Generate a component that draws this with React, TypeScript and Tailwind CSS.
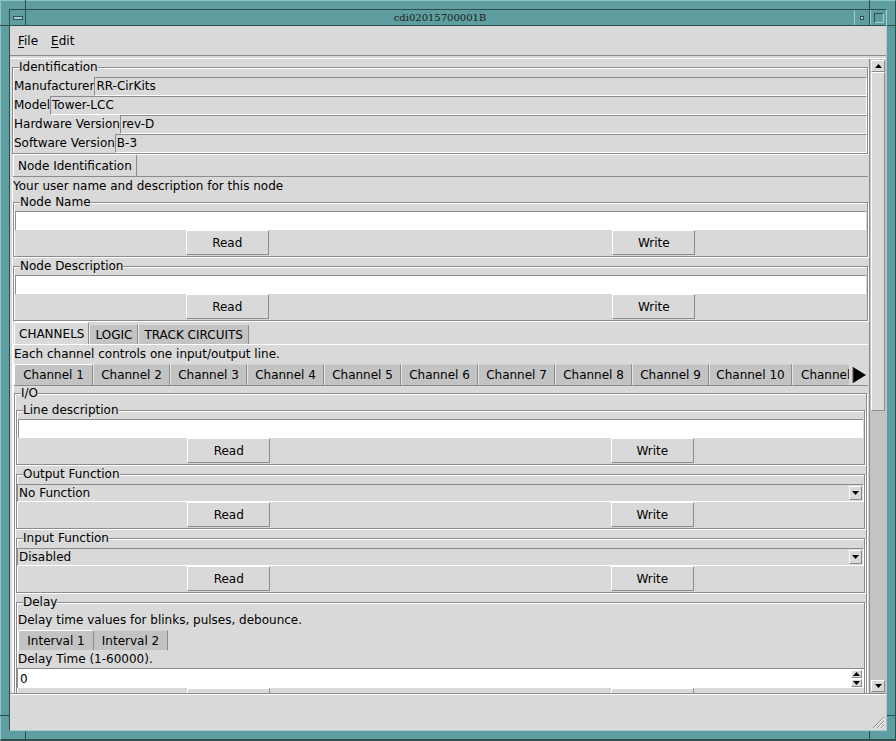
import React from "react";

function Group({
  label,
  className = "",
  children,
}: {
  label: string;
  className?: string;
  children?: React.ReactNode;
}) {
  return (
    <fieldset
      className={`border border-[#8c8c8c] shadow-[inset_1px_1px_0_#fff,1px_1px_0_#fff] ${className}`}
    >
      <legend className="ml-[6px] leading-[15px] bg-[#d9d9d9]">{label}</legend>
      {children}
    </fieldset>
  );
}

function RoEntry({ label, value }: { label: string; value: string }) {
  return (
    <div className="flex h-[19px]">
      <span className="pl-[1px] leading-[18px]">{label}</span>
      <div className="flex-1 border border-t-[#8c8c8c] border-l-[#8c8c8c] border-b-white border-r-white pl-[1px] leading-[16px]">
        {value}
      </div>
    </div>
  );
}

function WhiteEntry({ value = "" }: { value?: string }) {
  return (
    <div className="mt-[1px] pl-[1px] pr-px">
      <div className="h-[19px] bg-white border-t border-l border-[#8c8c8c] pl-[2px] leading-[17px]">
        {value}
      </div>
    </div>
  );
}

function Btn({ label }: { label: string }) {
  return (
    <div className="w-[83px] h-[25px] flex items-center justify-center border border-t-white border-l-white border-b-[#8c8c8c] border-r-[#8c8c8c] bg-[#d9d9d9]">
      {label}
    </div>
  );
}

function RW() {
  return (
    <div className="grid grid-cols-2 justify-items-center">
      <Btn label="Read" />
      <Btn label="Write" />
    </div>
  );
}

function DownTri() {
  return (
    <svg width="7" height="4" viewBox="0 0 7 4">
      <path d="M0 0h7L3.5 4z" fill="#000" />
    </svg>
  );
}

function UpTri() {
  return (
    <svg width="7" height="4" viewBox="0 0 7 4">
      <path d="M0 4h7L3.5 0z" fill="#000" />
    </svg>
  );
}

function Combo({ value }: { value: string }) {
  return (
    <div className="mt-[2px] h-[18px] flex items-center border border-t-[#8c8c8c] border-l-[#8c8c8c] border-b-white border-r-white">
      <span className="flex-1 pl-[1px] leading-[16px]">{value}</span>
      <div className="w-[13px] h-[14px] mr-[1px] flex items-center justify-center border border-t-white border-l-white border-b-[#8c8c8c] border-r-[#8c8c8c]">
        <DownTri />
      </div>
    </div>
  );
}

function Tab({
  label,
  selected = false,
}: {
  label: string;
  selected?: boolean;
}) {
  return (
    <div
      className={`flex items-center whitespace-nowrap rounded-t-[2px] border-r border-r-[#8c8c8c] border-l border-t ${
        selected
          ? "border-l-white border-t-white px-[4px] h-[22px] bg-[#d9d9d9]"
          : "border-l-[#ececec] border-t-[#d9d9d9] px-[5px] h-[20px] mt-[2px] bg-[#c3c3c3]"
      }`}
    >
      {label}
    </div>
  );
}

function SmallTab({
  label,
  w,
  selected = false,
  align = "justify-center",
}: {
  label: string;
  w: string;
  selected?: boolean;
  align?: string;
}) {
  return (
    <div
      className={`${w} ${align} shrink-0 flex items-center whitespace-nowrap h-[21px] bg-[#c3c3c3] border-r border-r-[#8c8c8c] border-t ${
        selected ? "border-l border-white rounded-t-[2px]" : "border-t-[#d0d0d0] border-l border-l-[#e6e6e6]"
      }`}
    >
      {label}
    </div>
  );
}

export default function App() {
  const channels: [string, string][] = [
    ["Channel 2", "w-[77px]"],
    ["Channel 3", "w-[77px]"],
    ["Channel 4", "w-[77px]"],
    ["Channel 5", "w-[77px]"],
    ["Channel 6", "w-[77px]"],
    ["Channel 7", "w-[77px]"],
    ["Channel 8", "w-[77px]"],
    ["Channel 9", "w-[77px]"],
    ["Channel 10", "w-[83px]"],
  ];
  return (
    <div className="relative w-[896px] h-[741px] bg-[#5f9ea0] border-t border-l border-[#8fc3c5] border-r border-r-[#2f4f4f] border-b-2 border-b-[#2f4f4f] pl-[8px] pt-[8px] pr-[8px] pb-[8px] font-['DejaVu_Sans',sans-serif] text-[12px] text-black">
      {/* frame corner marks */}
      <div className="absolute left-[24px] top-[-1px] w-px h-[9px] bg-[#2f4f4f]" />
      <div className="absolute left-[868px] top-[-1px] w-px h-[9px] bg-[#2f4f4f]" />
      <div className="absolute left-[-1px] top-[24px] w-[9px] h-px bg-[#2f4f4f]" />
      <div className="absolute right-[-1px] top-[24px] w-[9px] h-px bg-[#2f4f4f]" />
      <div className="absolute left-[-1px] top-[714px] w-[9px] h-px bg-[#2f4f4f]" />
      <div className="absolute right-[-1px] top-[714px] w-[9px] h-px bg-[#2f4f4f]" />
      <div className="absolute left-[24px] bottom-[-2px] w-px h-[10px] bg-[#2f4f4f]" />
      <div className="absolute left-[868px] bottom-[-2px] w-px h-[10px] bg-[#2f4f4f]" />

      <div className="h-full flex flex-col border-t border-l border-[#2f4f4f] border-r border-b border-r-[#9fcfd1] border-b-[#9fcfd1]">
        {/* title bar */}
        <div className="h-[16px] flex border-b border-[#2f4f4f] bg-[#5f9ea0]">
          <div className="w-[16px] border-r border-[#2f4f4f] flex items-center justify-center">
            <div className="w-[10px] h-[4px] bg-[#9fcfd1] border border-[#2f4f4f]" />
          </div>
          <div className="flex-1 flex items-center justify-center text-[10px] font-['DejaVu_Serif',serif] text-[#1a1a1a] leading-none">
            cdi02015700001B
          </div>
          <div className="w-[16px] border-l border-[#9fcfd1] border-r border-r-[#2f4f4f] flex items-center justify-center">
            <div className="w-[4px] h-[4px] bg-[#9fcfd1] border border-[#2f4f4f]" />
          </div>
          <div className="w-[16px] border-l border-[#9fcfd1] flex items-center justify-center">
            <div className="w-[10px] h-[10px] border border-t-[#2f4f4f] border-l-[#2f4f4f] border-b-[#9fcfd1] border-r-[#9fcfd1]" />
          </div>
        </div>

        <div className="flex-1 flex flex-col bg-[#d9d9d9]">
          {/* menu */}
          <div className="h-[30px] flex items-center pl-[8px] border-b border-[#8c8c8c]">
            <span>
              <span className="underline underline-offset-2">F</span>ile
            </span>
            <span className="ml-[13px]">
              <span className="underline underline-offset-2">E</span>dit
            </span>
          </div>

          {/* main scroll area */}
          <div className="mt-[2px] h-[636px] flex border-t border-white border-b border-b-[#8c8c8c]">
            <div className="w-[859px] overflow-hidden">
              <div className="ml-[2px] mr-[1px]">
                <Group label="Identification" className="mt-[1px] pt-[2px]">
                  <RoEntry label="Manufacturer" value="RR-CirKits" />
                  <RoEntry label="Model" value="Tower-LCC" />
                  <RoEntry label="Hardware Version" value="rev-D" />
                  <RoEntry label="Software Version" value="B-3" />
                </Group>

                {/* Node Identification notebook */}
                <div className="flex pl-[1px]">
                  <Tab label="Node Identification" selected />
                </div>
                <div className="border-t border-[#8c8c8c] border-l border-l-white">
                  <div className="leading-[16px] pt-[1px] pb-[1px]">Your user name and description for this node</div>
                  <Group label="Node Name" className="pb-[1px]">
                    <WhiteEntry />
                    <RW />
                  </Group>
                  <Group label="Node Description" className="mt-[2px] pb-[1px]">
                    <WhiteEntry />
                    <RW />
                  </Group>

                  {/* CHANNELS notebook */}
                  <div className="flex pl-[1px] mt-[1px]">
                    <Tab label="CHANNELS" selected />
                    <Tab label="LOGIC" />
                    <Tab label="TRACK CIRCUITS" />
                  </div>
                  <div className="border-t border-white border-l border-l-white">
                    <div className="leading-[16px] pt-[1px]">Each channel controls one input/output line.</div>
                    <div className="flex items-end h-[23px] mt-[1px] border-b border-[#8c8c8c]">
                      <div className="flex-1 flex overflow-hidden items-end">
                        <SmallTab label="Channel 1" w="w-[79px]" selected />
                        {channels.map(([c, w]) => (
                          <SmallTab key={c} label={c} w={w} />
                        ))}
                        <SmallTab label="Channel 11" w="w-[83px]" align="justify-start pl-[8px]" />
                      </div>
                      <div className="w-[19px] h-[21px] flex items-center justify-center bg-[#d9d9d9]">
                        <svg width="14" height="16" viewBox="0 0 14 16">
                          <path d="M1 0L14 8L1 16z" fill="#000" />
                          <path d="M1 0v16" stroke="#555" strokeWidth="1" />
                        </svg>
                      </div>
                    </div>

                    <Group label="I/O" className="mr-px">
                      <Group label="Line description" className="ml-[1px] mr-px mt-[2px] pb-[1px]">
                        <WhiteEntry />
                        <RW />
                      </Group>
                      <Group label="Output Function" className="ml-[1px] mr-px mt-[2px] pb-[1px]">
                        <Combo value="No Function" />
                        <RW />
                      </Group>
                      <Group label="Input Function" className="ml-[1px] mr-px mt-[2px] pb-[1px]">
                        <Combo value="Disabled" />
                        <RW />
                      </Group>
                      <Group label="Delay" className="ml-[1px] mr-px mt-[2px] pb-[1px]">
                        <div className="leading-[16px] pt-[2px] pl-[1px]">Delay time values for blinks, pulses, debounce.</div>
                        <div className="flex pl-[1px] mt-[2px]">
                          <div className="w-[76px] flex items-center justify-center whitespace-nowrap h-[20px] bg-[#c3c3c3] border-t border-l border-white border-r border-r-[#8c8c8c] rounded-t-[2px]">
                            Interval 1
                          </div>
                          <div className="w-[74px] flex items-center justify-center whitespace-nowrap h-[20px] bg-[#c3c3c3] border-t border-t-[#d0d0d0] border-r border-r-[#8c8c8c]">
                            Interval 2
                          </div>
                        </div>
                        <div className="leading-[16px] pt-[1px] pl-[1px]">Delay Time (1-60000).</div>
                        <div className="mt-[1px] h-[20px] flex items-center bg-white border-t border-l border-[#8c8c8c]">
                          <span className="flex-1 pl-[2px]">0</span>
                          <div className="flex flex-col mr-[2px] gap-[1px]">
                            <div className="w-[11px] h-[8px] flex items-center justify-center bg-[#d9d9d9] border border-t-white border-l-white border-b-[#8c8c8c] border-r-[#8c8c8c]">
                              <UpTri />
                            </div>
                            <div className="w-[11px] h-[8px] flex items-center justify-center bg-[#d9d9d9] border border-t-white border-l-white border-b-[#8c8c8c] border-r-[#8c8c8c]">
                              <DownTri />
                            </div>
                          </div>
                        </div>
                        <RW />
                      </Group>
                    </Group>
                  </div>
                </div>
              </div>
            </div>

            {/* scrollbar */}
            <div className="w-[17px] flex flex-col bg-[#c3c3c3] border-l border-[#8c8c8c] p-px">
              <div className="h-[12px] flex items-center justify-center bg-[#d9d9d9] border border-t-white border-l-white border-b-[#8c8c8c] border-r-[#8c8c8c]">
                <UpTri />
              </div>
              <div className="h-[339px] bg-[#d9d9d9] border border-t-white border-l-white border-b-[#8c8c8c] border-r-[#8c8c8c]" />
              <div className="flex-1" />
              <div className="h-[12px] flex items-center justify-center bg-[#d9d9d9] border border-t-white border-l-white border-b-[#8c8c8c] border-r-[#8c8c8c]">
                <DownTri />
              </div>
            </div>
          </div>

          {/* status area */}
          <div className="flex-1 flex justify-end items-end border-t border-white">
            <svg width="14" height="14" viewBox="0 0 14 14" className="mr-px mb-px">
              <path d="M13 2L2 13M13 6L6 13M13 10L10 13" stroke="#8c8c8c" strokeWidth="1" />
              <path d="M13 3L3 13M13 7L7 13M13 11L11 13" stroke="#fff" strokeWidth="1" />
            </svg>
          </div>
        </div>
      </div>
    </div>
  );
}
